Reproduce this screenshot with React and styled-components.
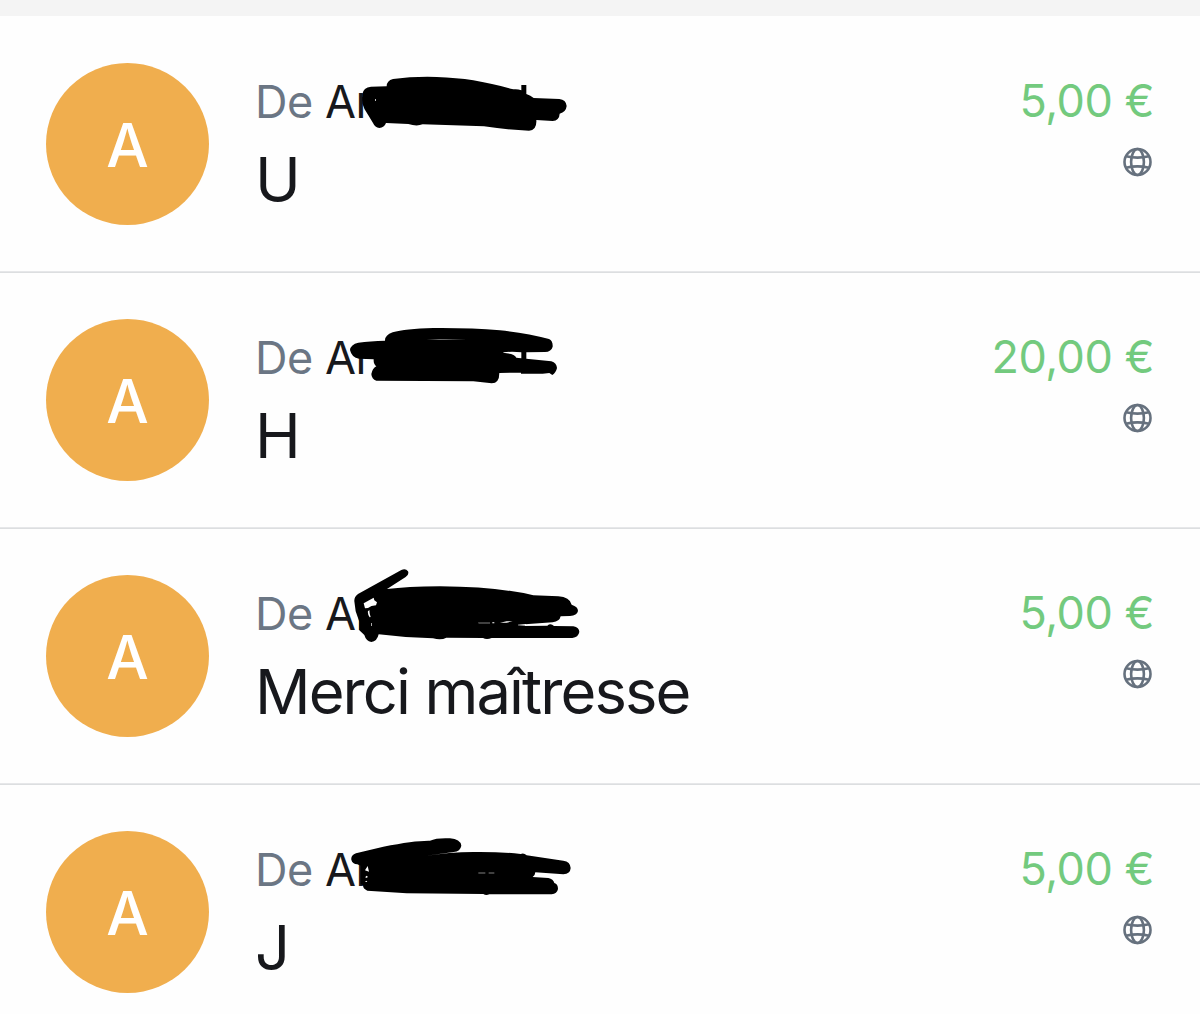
import React from 'react';
import styled, { createGlobalStyle } from 'styled-components';

const GlobalStyle = createGlobalStyle`
  * {
    box-sizing: border-box;
  }

  body {
    margin: 0;
    background-color: #fefefe;
    font-family: Inter, 'Liberation Sans', sans-serif;
    overflow: hidden;
  }
`;

const Page = styled.main`
  width: 1200px;
  height: 1014px;
  overflow: hidden;
  border-top: 16px solid #f4f4f4;
`;

const Row = styled.article`
  display: flex;
  height: 256px;
  padding: 47px 46px 0 46px;
  border-bottom: 1px solid #e6e7e9;

  & + & {
    padding-top: 46px;
    border-top: 1px solid #dcdee0;
  }
`;

const Avatar = styled.div`
  flex: none;
  width: 163px;
  height: 162px;
  border-radius: 50%;
  background-color: #f0ae4e;
  color: #fff;
  font-size: 60px;
  font-weight: 500;
  line-height: 164px;
  text-align: center;
`;

const Details = styled.div`
  position: relative;
  flex: 1;
  margin-left: 46px;
`;

const Sender = styled.div`
  height: 78px;
  color: #6b7684;
  font-size: 45px;
  line-height: 78px;
  letter-spacing: -0.6px;
  white-space: pre;
`;

const Name = styled.span`
  margin-left: 0.5px;
  color: #17181c;
`;

const Message = styled.div`
  color: #17181c;
  font-size: 61.5px;
  line-height: 77px;
  letter-spacing: -1.9px;
  white-space: nowrap;
`;

const Side = styled.div`
  display: flex;
  flex-direction: column;
  align-items: flex-end;
`;

const Amount = styled.div`
  height: 78px;
  color: #73ca7e;
  font-size: 45px;
  line-height: 76px;
  letter-spacing: -0.5px;
  white-space: nowrap;
`;

const Globe = styled.svg`
  width: 30px;
  height: 30px;
  margin: 6px 1px 0 0;
  fill: none;
  stroke: #66717e;
  stroke-width: 2.6;
`;

const Scribble = styled.svg`
  position: absolute;
  top: -3px;
  left: -15px;
  width: 350px;
  height: 90px;
  overflow: visible;
  fill: #000;
`;

const payments = [
  {
    name: 'Ar',
    message: 'U',
    amount: '5,00 €',
    ink: 'M367 102Q370 83 393 80L440 79Q440 62 459 57Q520 49 590 51Q650 53 700 61Q770 74 820 88Q832 86 844 91V75H859V102Q872 106 881 114L958 117Q978 119 980 138Q978 156 959 161Q958 181 938 183L889 180Q891 211 867 212Q800 209 732 199L548 193Q530 200 505 192L438 189Q433 203 418 204Q405 202 399 189L384 164Q372 150 367 130Z',
    gaps: 'M405 118h3v4h-3Z',
  },
  {
    name: 'Ar',
    message: 'H',
    amount: '20,00 €',
    ink: 'M330 102Q332 85 355 80Q390 75 435 74Q434 58 458 49Q495 38 580 36Q690 35 780 43Q860 52 927 69Q939 74 938 92Q934 107 915 108L859 109V128L934 136Q950 141 951 156Q948 170 937 177L928 171L908 173H843V170L778 171Q778 202 755 202L700 196L409 194Q395 190 394 174Q397 158 409 151Q400 145 401 130L357 128Q335 125 330 102Z',
    gaps: 'M560 71Q615 70 680 72Q615 72 560 71ZM790 109Q815 106 844 109V127L829 125Q824 114 800 112L790 110Z',
  },
  {
    name: 'Ar',
    message: 'Merci maîtresse',
    amount: '5,00 €',
    dy: -36,
    ink: 'M343 124Q342 111 354 102L484 30Q497 24 504 34Q508 43 497 51L441 87Q500 80 600 79Q780 81 880 106L955 109Q989 111 995 134Q1014 140 1014 153Q1011 167 990 168L962 169Q959 184 938 187L855 193V198L922 197Q932 188 942 198L1000 199Q1018 203 1018 216Q1015 232 997 234H755Q740 240 729 234L619 233Q604 241 579 235L497 231L416 223Q411 245 394 246Q378 243 373 225L358 211V185L347 154Z',
    gaps: 'M371 130L401 113L403 121L411 127L408 136Q393 136 384 144L375 145ZM384 153Q382 162 389 172L392 171Q387 158 389 151ZM394 189h2v9h-2ZM714 188H750V190H716ZM757 187h6v3h-6ZM780 188L800 184H818L800 188ZM834 194L858 192V197L834 196Z',
  },
  {
    name: 'Ar',
    message: 'J',
    amount: '5,00 €',
    dy: -6,
    ink: 'M334 101Q332 88 348 82L430 62Q525 43 570 44Q590 35 630 37Q661 39 664 59Q661 76 641 78L548 91Q630 78 700 78Q780 77 842 84Q851 79 860 88L970 104Q991 107 992 126Q991 144 970 145L886 139Q885 150 878 153L925 156Q940 159 943 171Q954 174 954 189Q951 204 935 205H748Q738 210 730 204L500 202L382 194Q369 189 369 178L362 174V119L352 115Q337 114 334 101Z',
    gaps: 'M375 133L383 120L387 137ZM376 153L380 149L384 153L378 156ZM375 168L379 164L382 168ZM715 140H736V142H715ZM746 140H763V142H746Z',
  },
];

const PaymentRow = ({ payment }) => (
  <Row>
    <Avatar>A</Avatar>
    <Details>
      <Sender>
        De <Name>{payment.name}</Name>
      </Sender>
      <Message>{payment.message}</Message>
      <Scribble viewBox="0 0 1050 270" aria-hidden="true">
        <g transform={`translate(0 ${payment.dy || 0})`}>
          <path d={payment.ink} />
          <path d={payment.gaps} fill="#fefefe" />
        </g>
      </Scribble>
    </Details>
    <Side>
      <Amount>{payment.amount}</Amount>
      <Globe viewBox="0 0 30 30">
        <circle cx="14.5" cy="15" r="13" />
        <ellipse cx="14.5" cy="15" rx="6.4" ry="13" />
        <path d="M3 9.2Q14.5 12 26 9.2M3 20.8Q14.5 18 26 20.8" />
      </Globe>
    </Side>
  </Row>
);

const App = () => (
  <>
    <GlobalStyle />
    <Page>
      {payments.map((payment, index) => (
        <PaymentRow key={index} payment={payment} />
      ))}
    </Page>
  </>
);

export default App;
